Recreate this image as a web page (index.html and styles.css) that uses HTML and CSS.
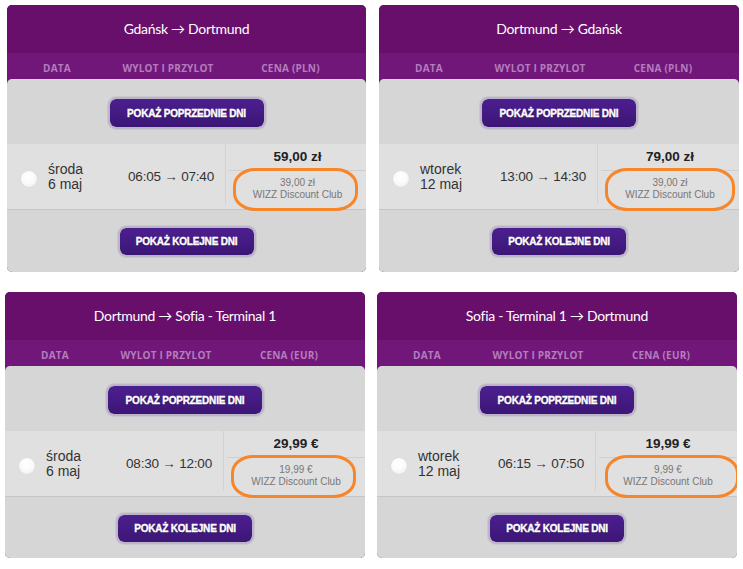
FILE: index.html
```html
<!DOCTYPE html>
<html lang="pl">
<head>
<meta charset="utf-8">
<title>Loty</title>
<link rel="stylesheet" href="styles.css">
</head>
<body>
<div class="page">
  <div class="row row-top">
    <section class="panel">
      <header class="title">Gdańsk → Dortmund</header>
      <div class="cols"><span>DATA</span><span>WYLOT I PRZYLOT</span><span>CENA (PLN)</span></div>
      <div class="body">
        <div class="btn-wrap"><button class="btn btn-prev">POKAŻ POPRZEDNIE DNI</button></div>
        <div class="flight">
          <div class="date"><span class="radio"></span><span class="dtext">środa<br>6 maj</span></div>
          <div class="times">06:05 → 07:40</div>
          <div class="price">
            <div class="main">59,00 zł</div>
            <div class="club">39,00 zł<br>WIZZ Discount Club</div>
            <span class="ring"></span>
          </div>
        </div>
        <div class="btn-wrap btn-wrap-next"><button class="btn btn-next">POKAŻ KOLEJNE DNI</button></div>
      </div>
    </section>
    <section class="panel">
      <header class="title">Dortmund → Gdańsk</header>
      <div class="cols"><span>DATA</span><span>WYLOT I PRZYLOT</span><span>CENA (PLN)</span></div>
      <div class="body">
        <div class="btn-wrap"><button class="btn btn-prev">POKAŻ POPRZEDNIE DNI</button></div>
        <div class="flight">
          <div class="date"><span class="radio"></span><span class="dtext">wtorek<br>12 maj</span></div>
          <div class="times">13:00 → 14:30</div>
          <div class="price">
            <div class="main">79,00 zł</div>
            <div class="club">39,00 zł<br>WIZZ Discount Club</div>
            <span class="ring ring-wide"></span>
          </div>
        </div>
        <div class="btn-wrap btn-wrap-next"><button class="btn btn-next">POKAŻ KOLEJNE DNI</button></div>
      </div>
    </section>
  </div>
  <div class="row row-bottom">
    <section class="panel">
      <header class="title">Dortmund → Sofia - Terminal 1</header>
      <div class="cols"><span>DATA</span><span>WYLOT I PRZYLOT</span><span>CENA (EUR)</span></div>
      <div class="body">
        <div class="btn-wrap"><button class="btn btn-prev">POKAŻ POPRZEDNIE DNI</button></div>
        <div class="flight">
          <div class="date"><span class="radio"></span><span class="dtext">środa<br>6 maj</span></div>
          <div class="times">08:30 → 12:00</div>
          <div class="price">
            <div class="main">29,99 €</div>
            <div class="club">19,99 €<br>WIZZ Discount Club</div>
            <span class="ring"></span>
          </div>
        </div>
        <div class="btn-wrap btn-wrap-next"><button class="btn btn-next">POKAŻ KOLEJNE DNI</button></div>
      </div>
    </section>
    <section class="panel">
      <header class="title">Sofia - Terminal 1 → Dortmund</header>
      <div class="cols"><span>DATA</span><span>WYLOT I PRZYLOT</span><span>CENA (EUR)</span></div>
      <div class="body">
        <div class="btn-wrap"><button class="btn btn-prev">POKAŻ POPRZEDNIE DNI</button></div>
        <div class="flight">
          <div class="date"><span class="radio"></span><span class="dtext">wtorek<br>12 maj</span></div>
          <div class="times">06:15 → 07:50</div>
          <div class="price">
            <div class="main">19,99 €</div>
            <div class="club">9,99 €<br>WIZZ Discount Club</div>
            <span class="ring ring-wider"></span>
          </div>
        </div>
        <div class="btn-wrap btn-wrap-next"><button class="btn btn-next">POKAŻ KOLEJNE DNI</button></div>
      </div>
    </section>
  </div>
</div>
</body>
</html>
```

FILE: styles.css
```css
* { box-sizing: border-box; }
html, body { margin: 0; padding: 0; background: #fff; }
body { font-family: "Liberation Sans", Arial, sans-serif; color: #333; }

.page { display: flex; flex-direction: column; gap: 20px; padding-top: 5px; }
.row { display: flex; }
.row-top { padding-left: 7px; gap: 13px; }
.row-bottom { padding-left: 5px; gap: 12px; }
.row-top .panel { height: 267px; }
.row-bottom .panel { height: 266px; }

.panel {
  width: 360px;
  border-radius: 5px;
  overflow: hidden;
  background: #72177a;
  display: flex;
  flex-direction: column;
}
.row-top .panel:first-child { width: 359px; }

.title {
  height: 48px;
  background: #670f6b;
  color: #fff;
  font-family: Lato, "Open Sans", sans-serif;
  font-size: 14px;
  letter-spacing: -0.3px;
  display: flex;
  align-items: center;
  justify-content: center;
  padding-bottom: 1px;
}

.cols {
  height: 26px;
  display: grid;
  grid-template-columns: 100px 122px 1fr;
  padding: 9px 14px 0 0;
  font-family: "Open Sans", "Noto Sans", sans-serif;
  font-size: 10px;
  font-weight: 700;
  letter-spacing: 0.2px;
  color: #b47dbd;
  line-height: 13px;
  text-align: center;
}

.body {
  flex: 1;
  background: #d6d6d6;
  border-radius: 5px 5px 0 0;
  display: flex;
  flex-direction: column;
}

.btn-wrap { display: flex; justify-content: center; padding: 18px 0 15px; }
.btn-wrap-next { padding: 16px 0 0; }

.btn {
  font-family: "Liberation Sans", Arial, sans-serif;
  font-weight: 700;
  font-size: 10px;
  color: #fff;
  letter-spacing: -0.2px;
  -webkit-text-stroke: 0.35px #fff;
  text-shadow: 0 1px 1px rgba(0,0,0,0.45);
  background: linear-gradient(#4c1f8f, #3c1676);
  border: 2px solid #bcb5c8;
  border-radius: 8px;
  padding: 0;
  background-clip: padding-box;
  box-shadow: 0 0 0 1px #cbc7d1;
}
.btn-prev { width: 158px; height: 32px; }
.btn-next { width: 138px; height: 31px; }

.flight {
  height: 66px;
  background: #e0e0e0;
  border-bottom: 1px solid #c6c6c6;
  display: grid;
  grid-template-columns: 110px 108px 1fr;
}

.date { display: flex; align-items: center; padding-left: 14px; gap: 11px; }
.radio {
  width: 16px; height: 16px; border-radius: 50%;
  background: radial-gradient(circle at 45% 40%, #ffffff 0%, #fbfbfb 45%, #e9e9e9 100%);
  box-shadow: 0 0 1px rgba(0,0,0,0.15);
  margin-top: 4px;
}
.dtext { font-size: 14px; line-height: 15px; color: #333; margin-top: 1px; }

.times {
  display: flex; align-items: center; justify-content: center;
  font-size: 13.5px; color: #333; letter-spacing: -0.2px;
  padding-bottom: 1px;
}

.price {
  position: relative;
  border-left: 1px solid #d2d2d2;
  margin-bottom: 5px;
  text-align: center;
  padding-left: 3px;
}
.main {
  font-size: 13.5px; font-weight: 700; color: #222;
  line-height: 16px; padding-top: 5px; height: 27px;
  border-bottom: 1px solid #cfcfcf;
}
.club {
  font-size: 10px; line-height: 12px; color: #777; padding-top: 6px;
}

.ring {
  position: absolute;
  left: 7px; top: 24px;
  width: 125px; height: 43px;
  border: 3px solid #f7852a;
  border-radius: 22px / 18px;
}
.ring-wide { width: 130px; }
.ring-wider { left: 9px; width: 134px; }
```
